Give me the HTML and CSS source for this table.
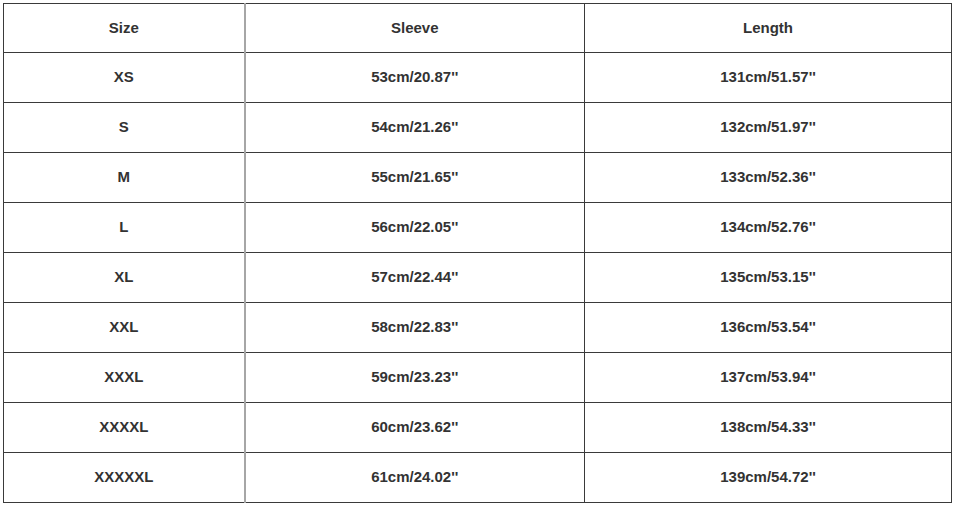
FILE: index.html
```html
<!DOCTYPE html>
<html>
<head>
<meta charset="utf-8">
<link rel="stylesheet" href="styles.css">
</head>
<body>
<table class="size-table">
  <colgroup>
    <col class="c1"><col class="c2"><col class="c3">
  </colgroup>
  <tr class="head"><td>Size</td><td>Sleeve</td><td>Length</td></tr>
  <tr><td>XS</td><td>53cm/20.87''</td><td>131cm/51.57''</td></tr>
  <tr><td>S</td><td>54cm/21.26''</td><td>132cm/51.97''</td></tr>
  <tr><td>M</td><td>55cm/21.65''</td><td>133cm/52.36''</td></tr>
  <tr><td>L</td><td>56cm/22.05''</td><td>134cm/52.76''</td></tr>
  <tr><td>XL</td><td>57cm/22.44''</td><td>135cm/53.15''</td></tr>
  <tr><td>XXL</td><td>58cm/22.83''</td><td>136cm/53.54''</td></tr>
  <tr><td>XXXL</td><td>59cm/23.23''</td><td>137cm/53.94''</td></tr>
  <tr><td>XXXXL</td><td>60cm/23.62''</td><td>138cm/54.33''</td></tr>
  <tr><td>XXXXXL</td><td>61cm/24.02''</td><td>139cm/54.72''</td></tr>
</table>
</body>
</html>
```
FILE: styles.css
```css
html, body {
  margin: 0;
  padding: 0;
  background: #ffffff;
}
body {
  padding: 3px;
}
.size-table {
  border-collapse: collapse;
  width: 948px;
  table-layout: fixed;
  font-family: "Liberation Sans", Arial, sans-serif;
  font-weight: bold;
  font-size: 15px;
  line-height: 17px;
  color: #333333;
  border: 1px solid #888888;
}
.c1 { width: 241px; }
.c2 { width: 340px; }
.c3 { width: 367px; }
.size-table td {
  border: 1px solid #3a3a3a;
  height: 47px;
  padding: 0 0 2px 0;
  text-align: center;
  vertical-align: middle;
}
.size-table td:first-child {
  border-right: 2px solid #a6a6a6;
}
.size-table .head td {
  height: 46px;
}
```
